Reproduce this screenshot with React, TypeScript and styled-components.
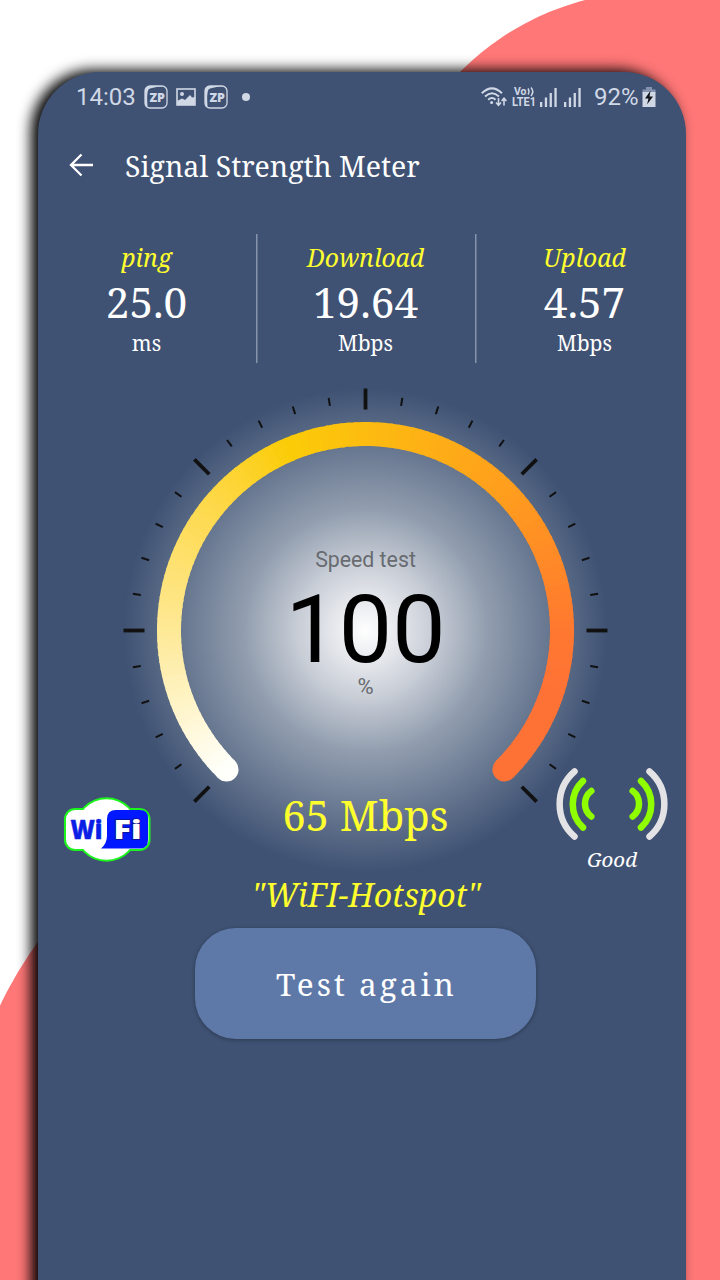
import React from "react";
import styled, { createGlobalStyle } from "styled-components";

const serif = `"Noto Serif", "DejaVu Serif Condensed", "DejaVu Serif", serif`;
const sans = `Roboto, "Liberation Sans", sans-serif`;

const GlobalStyle = createGlobalStyle`
  * { box-sizing: border-box; }
  body { margin: 0; background: #fff; }
`;

const Page = styled.main`
  position: relative;
  width: 720px;
  height: 1280px;
  padding: 72px 34px 0 38px;
  overflow: hidden;
  background: #fff;
`;

const Backdrop = styled.svg`
  position: absolute;
  inset: 0;
`;

const Phone = styled.div`
  position: relative;
  display: flex;
  flex-direction: column;
  width: 648px;
  height: 1300px;
  border-radius: 62px;
  overflow: hidden;
  background: #3f5273;
  box-shadow: -7px -2px 14px #000;
`;

const StatusBar = styled.div`
  display: flex;
  align-items: center;
  justify-content: space-between;
  height: 50px;
  padding: 0 30px 0 38px;
  color: #d0d8e6;
  font: 400 24px/28px ${sans};
`;

const StatusGroup = styled.div`
  display: flex;
  align-items: center;
`;

const StatusText = styled.span<{ $width: number }>`
  width: ${(p) => p.$width}px;
  white-space: nowrap;
`;

const Header = styled.header`
  display: flex;
  align-items: center;
  height: 85px;
  padding: 1px 0 0 31px;
  gap: 31px;
`;

const Title = styled.h1`
  margin: 0;
  padding-top: 2px;
  color: #fff;
  font: 400 28.5px/40px ${serif};
  white-space: nowrap;
`;

const Stats = styled.section`
  display: grid;
  grid-template-columns: 219px 219px 219px;
  height: 129px;
  margin: 27px 0 0 -1px;
`;

const Stat = styled.div`
  display: flex;
  flex-direction: column;
  align-items: center;
  padding-top: 7px;
  font-family: ${serif};
  color: #fff;
  & + & {
    box-shadow: inset 1.5px 0 #8594ac;
  }
`;

const StatLabel = styled.span`
  font-size: 24.7px;
  line-height: 34px;
  font-style: italic;
  color: #ffff2e;
`;

const StatValue = styled.span`
  font-size: 42.3px;
  line-height: 54px;
`;

const StatUnit = styled.span`
  font-size: 21px;
  line-height: 28px;
`;

const Meter = styled.section`
  display: grid;
  height: 485px;
  margin-top: 25px;
  & > * {
    grid-area: 1 / 1;
  }
`;

const Dial = styled.svg`
  margin-left: 85px;
`;

const Readout = styled.div`
  position: relative;
  display: flex;
  flex-direction: column;
  align-items: center;
  width: 655px;
  padding-top: 157px;
  font-family: ${sans};
  color: #686b70;
`;

const Caption = styled.span<{ $height: number; $size: number }>`
  font-size: ${(p) => p.$size}px;
  line-height: ${(p) => p.$height}px;
`;

const Percent = styled.span`
  margin: 9px 0 -1px;
  color: #000;
  font-size: 95px;
  line-height: 92px;
`;

const Speed = styled.span`
  margin-top: 86px;
  color: #ffff2e;
  font: 400 41.5px/60px ${serif};
`;

const WifiMark = styled.svg`
  position: relative;
  align-self: end;
  margin: 0 0 11px 26px;
`;

const Signal = styled.div`
  position: relative;
  justify-self: end;
  align-self: end;
  display: flex;
  flex-direction: column;
  align-items: center;
  width: 112px;
  margin: 0 25px -5px 0;
`;

const SignalLabel = styled.span`
  color: #fff;
  font: italic 400 20.5px/37px ${serif};
`;

const NetworkName = styled.p`
  width: 656px;
  margin: 0;
  padding-top: 1px;
  text-align: center;
  color: #ffff2e;
  font: italic 400 32px/42px ${serif};
`;

const TestButton = styled.button`
  width: 341px;
  height: 111px;
  margin: 12px 0 0 157px;
  padding: 0 0 0 2px;
  border: 0;
  border-radius: 41px;
  background: #5e79a8;
  box-shadow: 0 1px 4px rgba(0, 0, 0, 0.3);
  color: #fff;
  font: 400 31.5px/42px ${serif};
  letter-spacing: 3px;
`;

const AppBadge = () => (
  <svg width="24" height="24" viewBox="0 0 24 24">
    <rect x="1" y="1" width="22" height="22" rx="5" fill="none" stroke="#d0d8e6" strokeWidth="1.3" />
    <path d="M1 20V6q0-5 5-5h14Q6 2.500 4.500 4.500Q2.500 8 3.500 21.500Q1 22 1 20z" fill="#d0d8e6" />
    <text x="5.500" y="16.800" fontFamily="Open Sans" fontWeight="800" fontSize="12.500" textLength="15.500" lengthAdjust="spacingAndGlyphs" fill="#d0d8e6">ZP</text>
  </svg>
);

const PictureIcon = () => (
  <svg width="20" height="18" viewBox="0 0 20 18">
    <rect x="1" y="1" width="18" height="16" fill="none" stroke="#d0d8e6" strokeWidth="1.6" />
    <circle cx="6" cy="6" r="2" fill="#d0d8e6" />
    <path d="M1 17v-4l5-2.500 3 1.500 5-5 2 2.500 3-.5v8z" fill="#d0d8e6" />
  </svg>
);

const WifiStatusIcon = () => (
  <svg width="26" height="20" viewBox="0 0 26 20" fill="none" stroke="#d0d8e6" strokeWidth="2">
    <path d="M.8 6.200Q11 -3.500 21 6.200" />
    <path d="M4 9.600Q11 3 18 9.600" />
    <path d="M7.200 12.800Q11 9.300 14.500 12.800" />
    <circle cx="10.600" cy="15.500" r="1.500" fill="#d0d8e6" stroke="none" />
    <path d="M17.500 11v7M15 15.500l2.500 2.700 2.500-2.700M23 18.500v-7M20.600 14l2.400-2.700 2.400 2.700" strokeWidth="1.600" />
  </svg>
);

const LteIcon = () => (
  <svg width="25" height="24" viewBox="0 0 25 24" fill="#d0d8e6" fontFamily="Roboto" fontWeight="700" overflow="visible">
    <text x="2" y="10" fontSize="10.500" textLength="12.500" lengthAdjust="spacingAndGlyphs">Vo</text>
    <path d="M16 3.500q2 3 0 6M19 2.500q3.500 4 0 8.500" fill="none" stroke="#d0d8e6" strokeWidth="1.500" />
    <text x="0" y="21.200" fontSize="12.500" textLength="24" lengthAdjust="spacingAndGlyphs">LTE1</text>
  </svg>
);

const BarsIcon = () => (
  <svg width="17" height="19" viewBox="0 0 17 19" fill="#d0d8e6">
    <rect x="0" y="14" width="2.300" height="5" />
    <rect x="4.800" y="9.500" width="2.300" height="9.500" />
    <rect x="9.600" y="5" width="2.300" height="14" />
    <rect x="14.400" y="0" width="2.300" height="19" />
  </svg>
);

const BatteryIcon = () => (
  <svg width="14" height="20" viewBox="0 0 14 20">
    <path d="M4 0h6v2.500h3.500V6H.5V2.500H4z" fill="#8494ae" />
    <rect x=".5" y="5" width="13" height="15" fill="#d0d8e6" />
    <path d="M8.500 3.800L3 11.500h3.500l-1.500 6 6-8H7.500z" fill="#10131a" />
  </svg>
);

const StatusItem = styled.span<{ $gap: number }>`
  display: flex;
  margin-left: ${(p) => p.$gap}px;
`;

const Dot = styled.span`
  width: 8px;
  height: 8px;
  margin-left: 13.5px;
  border-radius: 50%;
  background: #d0d8e6;
`;

const C = 242.5;
const point = (deg: number, r: number) => {
  const a = ((deg - 90) * Math.PI) / 180;
  return [C + r * Math.cos(a), C + r * Math.sin(a)];
};

const stops: [number, number[]][] = [
  [-135, [255, 255, 252]],
  [-90, [254, 233, 150]],
  [-45, [254, 214, 62]],
  [-23, [251, 204, 8]],
  [0, [253, 188, 16]],
  [45, [255, 158, 29]],
  [90, [255, 120, 48]],
  [108, [255, 114, 53]],
  [136, [255, 114, 53]],
];

const arcColor = (deg: number) => {
  const i = Math.max(1, stops.findIndex(([d]) => d >= deg));
  const [d0, a] = stops[i - 1];
  const [d1, b] = stops[i];
  const t = (deg - d0) / (d1 - d0);
  return `rgb(${a.map((v, k) => Math.round(v + (b[k] - v) * t)).join(",")})`;
};

const RING = 196.5;
const segments = Array.from({ length: 135 }, (_, i) => -135 + i * 2);
const ticks = Array.from({ length: 31 }, (_, i) => -135 + i * 9);

const SpeedDial = () => (
  <Dial width="485" height="485" viewBox="0 0 485 485">
    <defs>
      <radialGradient id="glow">
        <stop offset="0" stopColor="#fff" />
        <stop offset=".28" stopColor="#c8cdd6" />
        <stop offset=".5" stopColor="#929eaf" />
        <stop offset="1" stopColor="#3f5273" />
      </radialGradient>
    </defs>
    <circle cx={C} cy={C} r="242" fill="url(#glow)" />
    {ticks.map((deg, i) => {
      const major = i % 5 === 0;
      const [x1, y1] = point(deg, major ? 221 : 227.5);
      const [x2, y2] = point(deg, major ? 242 : 235.5);
      return <line key={deg} x1={x1} y1={y1} x2={x2} y2={y2} stroke="#111" strokeWidth={major ? 3.8 : 2} />;
    })}
    {[-135, 135].map((deg) => {
      const [cx, cy] = point(deg, RING);
      return <circle key={deg} cx={cx} cy={cy} r="12" fill={arcColor(deg)} />;
    })}
    {segments.map((deg) => {
      const [x1, y1] = point(deg, RING);
      const [x2, y2] = point(Math.min(deg + 2.6, 135), RING);
      return (
        <path key={deg} d={`M${x1} ${y1}A${RING} ${RING} 0 0 1 ${x2} ${y2}`} fill="none" stroke={arcColor(deg + 1)} strokeWidth="24" />
      );
    })}
  </Dial>
);

const WifiLogo = () => (
  <WifiMark width="87" height="65" viewBox="0 0 87 65">
    <g fill="#1cf51c">
      <circle cx="42.500" cy="32.500" r="32.300" />
      <rect x="0" y="11" width="86.500" height="43" rx="11" />
    </g>
    <g fill="#fff">
      <circle cx="42.500" cy="32.500" r="30.300" />
      <rect x="2" y="13" width="82.500" height="39" rx="9" />
    </g>
    <path d="M52 13H76q8 0 8 8v22q0 8.500-8 8.500H37q6-5 6-13V22q0-9 9-9z" fill="#0018ff" />
    <g fontFamily="Open Sans" fontWeight="800" fontSize="27">
      <text x="6.500" y="42" fill="#0a1ee6" stroke="#0a1ee6" strokeWidth=".5" textLength="32" lengthAdjust="spacingAndGlyphs">Wi</text>
      <text x="49.500" y="42" fill="#fff" stroke="#0a148c" strokeWidth="1.500" paintOrder="stroke" textLength="28" lengthAdjust="spacingAndGlyphs">Fi</text>
    </g>
  </WifiMark>
);

const waves = (
  <>
    <path d="M18.500 4.500A43 43 0 0 0 18.500 69.500" stroke="#e3e2e4" />
    <path d="M27 14A31.500 31.500 0 0 0 27 60.500" stroke="#8fff00" />
    <path d="M35.300 24A16 16 0 0 0 35.300 49.500" stroke="#8fff00" />
  </>
);

const SignalIcon = () => (
  <svg width="112" height="74" viewBox="0 0 112 74" fill="none" strokeWidth="6.5" strokeLinecap="round">
    {waves}
    <g transform="translate(112 0) scale(-1 1)">{waves}</g>
  </svg>
);

const readings = [
  { label: "ping", value: "25.0", unit: "ms" },
  { label: "Download", value: "19.64", unit: "Mbps" },
  { label: "Upload", value: "4.57", unit: "Mbps" },
];

export default function App() {
  return (
    <Page>
      <GlobalStyle />
      <Backdrop width="720" height="1280" fill="#ff7777">
        <circle cx="652.400" cy="261.500" r="270" />
        <circle cx="362" cy="1178" r="401" />
        <rect x="600" y="200" width="120" height="1080" />
      </Backdrop>
      <Phone>
        <StatusBar>
          <StatusGroup>
            <StatusText $width={68}>14:03</StatusText>
            <AppBadge />
            <StatusItem $gap={8}><PictureIcon /></StatusItem>
            <StatusItem $gap={8}><AppBadge /></StatusItem>
            <Dot />
          </StatusGroup>
          <StatusGroup>
            <WifiStatusIcon />
            <StatusItem $gap={5}><LteIcon /></StatusItem>
            <StatusItem $gap={3}><BarsIcon /></StatusItem>
            <StatusItem $gap={7}><BarsIcon /></StatusItem>
            <StatusItem $gap={13}><StatusText $width={48}>92%</StatusText></StatusItem>
            <BatteryIcon />
          </StatusGroup>
        </StatusBar>
        <Header>
          <svg width="25" height="24" viewBox="0 0 25 24" fill="none" stroke="#fff" strokeWidth="2.300">
            <path d="M24 12H2.500M12.500 1.500L2 12l10.500 10.500" />
          </svg>
          <Title>Signal Strength Meter</Title>
        </Header>
        <Stats>
          {readings.map((r) => (
            <Stat key={r.label}>
              <StatLabel>{r.label}</StatLabel>
              <StatValue>{r.value}</StatValue>
              <StatUnit>{r.unit}</StatUnit>
            </Stat>
          ))}
        </Stats>
        <Meter>
          <SpeedDial />
          <Readout>
            <Caption $height={30} $size={21.3}>Speed test</Caption>
            <Percent>100</Percent>
            <Caption $height={24} $size={22}>%</Caption>
            <Speed>65 Mbps</Speed>
          </Readout>
          <WifiLogo />
          <Signal>
            <SignalIcon />
            <SignalLabel>Good</SignalLabel>
          </Signal>
        </Meter>
        <NetworkName>"WiFI-Hotspot"</NetworkName>
        <TestButton>Test again</TestButton>
      </Phone>
    </Page>
  );
}
